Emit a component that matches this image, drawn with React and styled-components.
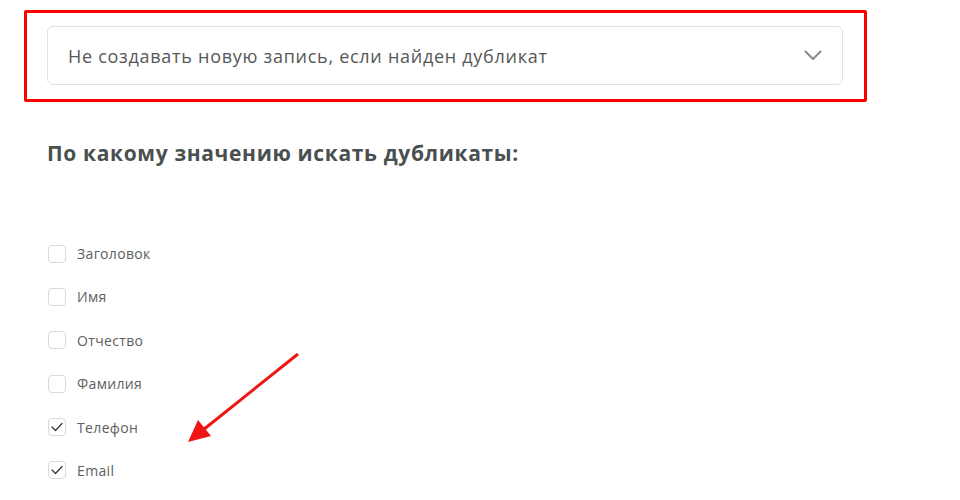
import React from "react";
import styled, { createGlobalStyle } from "styled-components";

const GlobalStyle = createGlobalStyle`
  body {
    margin: 0;
    background: #ffffff;
    font-family: "Open Sans", "Liberation Sans", sans-serif;
  }
`;

const Page = styled.div`
  position: relative;
  width: 960px;
  height: 500px;
  overflow: hidden;
  padding: 10px 0 0 24px;
  box-sizing: border-box;
`;

const Highlight = styled.div`
  width: 843px;
  height: 92px;
  box-sizing: border-box;
  border: 3px solid #ff0000;
  border-radius: 2px;
  padding: 13px 21px 0 20px;
`;

const Select = styled.div`
  height: 59px;
  box-sizing: border-box;
  border: 1px solid #e2e2e2;
  border-radius: 6px;
  display: flex;
  align-items: center;
  justify-content: space-between;
  padding: 0 20px 0 20px;
`;

const SelectText = styled.span`
  font-size: 18px;
  color: #555858;
  letter-spacing: 0.72px;
`;

const Section = styled.div`
  padding-left: 23px;
`;

const Heading = styled.h2`
  margin: 38px 0 0;
  font-size: 21px;
  font-weight: 700;
  color: #4a4f4f;
  line-height: 26px;
  letter-spacing: 0.65px;
`;

const List = styled.div`
  margin-top: 78px;
  display: flex;
  flex-direction: column;
  gap: 24.4px;
`;

const Row = styled.label`
  display: flex;
  align-items: center;
  gap: 11px;
  height: 19px;
`;

const Box = styled.span`
  width: 18px;
  height: 18px;
  box-sizing: border-box;
  border: 1px solid #d9d9d9;
  border-radius: 4px;
  display: flex;
  align-items: center;
  justify-content: center;
  margin-left: 1px;
`;

const Label = styled.span`
  font-size: 14px;
  color: #5c6060;
  letter-spacing: 0.35px;
`;

const Arrow = styled.svg`
  position: absolute;
  left: 0;
  top: 0;
  pointer-events: none;
`;

const Chevron = () => (
  <svg width="18" height="11" viewBox="0 0 18 11">
    <path d="M1.5 1.5 L9 9 L16.5 1.5" fill="none" stroke="#8a8a8a" strokeWidth="2" strokeLinecap="round" strokeLinejoin="round" />
  </svg>
);

const Check = () => (
  <svg width="12" height="10" viewBox="0 0 12 10">
    <path d="M1 5 L4.5 8.5 L11 1.5" fill="none" stroke="#333a3a" strokeWidth="1.3" strokeLinecap="round" strokeLinejoin="round" />
  </svg>
);

const fields = [
  { name: "Заголовок", checked: false },
  { name: "Имя", checked: false },
  { name: "Отчество", checked: false },
  { name: "Фамилия", checked: false },
  { name: "Телефон", checked: true },
  { name: "Email", checked: true },
];

export default function App() {
  return (
    <Page>
      <GlobalStyle />
      <Highlight>
        <Select>
          <SelectText>Не создавать новую запись, если найден дубликат</SelectText>
          <Chevron />
        </Select>
      </Highlight>
      <Section>
        <Heading>По какому значению искать дубликаты:</Heading>
        <List>
          {fields.map((f) => (
            <Row key={f.name}>
              <Box>{f.checked && <Check />}</Box>
              <Label>{f.name}</Label>
            </Row>
          ))}
        </List>
      </Section>
      <Arrow width="960" height="500">
        <line x1="298" y1="354" x2="203" y2="430" stroke="#f01414" strokeWidth="3" />
        <polygon points="188,442 198,420 211,436" fill="#f01414" />
      </Arrow>
    </Page>
  );
}
